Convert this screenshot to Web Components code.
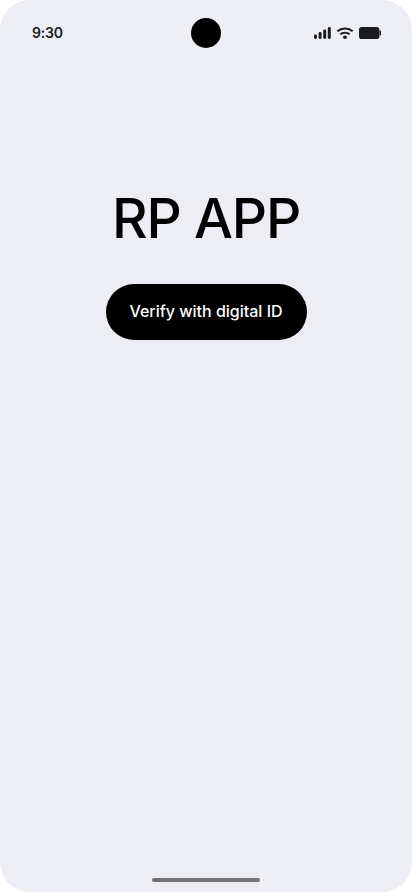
<!DOCTYPE html>
<html>
<head>
<meta charset="utf-8">
<title>RP APP</title>
<style>
  html, body { margin: 0; padding: 0; background: #fff; }
</style>
</head>
<body>
<phone-screen>
  <status-bar time="9:30"></status-bar>
  <rp-home title-text="RP APP" action="Verify with digital ID"></rp-home>
  <gesture-bar></gesture-bar>
</phone-screen>

<script>
class PhoneScreen extends HTMLElement {
  constructor() {
    super();
    this.attachShadow({ mode: 'open' });
    this.shadowRoot.innerHTML = `
      <style>
        :host {
          display: flex;
          flex-direction: column;
          width: 412px;
          height: 892px;
          background: #edeef4;
          border-radius: 30px;
          overflow: hidden;
          font-family: "Inter", "Roboto", sans-serif;
        }
      </style>
      <slot></slot>
    `;
  }
}

class StatusBar extends HTMLElement {
  constructor() {
    super();
    this.attachShadow({ mode: 'open' });
  }

  connectedCallback() {
    this.shadowRoot.innerHTML = `
      <style>
        :host {
          display: grid;
          grid-template-columns: 1fr 30px 1fr;
          align-items: center;
          height: 30px;
          padding: 18px 32px 0;
          flex: none;
        }
        .time {
          font: 600 14px "Inter", sans-serif;
          letter-spacing: -0.2px;
          color: #1b1c20;
          margin-top: -1px;
        }
        .camera {
          width: 30px;
          height: 30px;
          border-radius: 50%;
          background: #000;
        }
        .icons {
          display: flex;
          justify-content: flex-end;
          align-items: center;
          gap: 5px;
          margin-right: -1px;
        }
        svg { display: block; fill: #1b1c20; }
      </style>
      <span class="time">${this.getAttribute('time')}</span>
      <div class="camera"></div>
      <div class="icons">
        <svg width="17" height="12" viewBox="0 0 17 12">
          <rect x="0" y="7.5" width="3" height="4.5" rx="1.4"/>
          <rect x="4.6" y="5" width="3" height="7" rx="1.4"/>
          <rect x="9.2" y="2.5" width="3" height="9.5" rx="1.4"/>
          <rect x="13.8" y="0" width="3" height="12" rx="1.4"/>
        </svg>
        <svg width="18" height="12" viewBox="0 0 17 12" preserveAspectRatio="none">
          <path d="M.6 3.6A11.6 11.6 0 0 1 8.5 .6a11.6 11.6 0 0 1 7.9 3l-1.3 1.5A9.5 9.5 0 0 0 8.5 2.6a9.5 9.5 0 0 0-6.6 2.5z"/>
          <path d="M3.4 6.6A7.5 7.5 0 0 1 8.5 4.7a7.5 7.5 0 0 1 5.1 1.9l-1.3 1.5A5.4 5.4 0 0 0 8.5 6.7a5.4 5.4 0 0 0-3.8 1.4z"/>
          <circle cx="8.5" cy="10.2" r="1.8"/>
        </svg>
        <svg width="22" height="12" viewBox="0 0 22 12">
          <rect x="0" y="0" width="20.4" height="12" rx="2.8"/>
          <rect x="20.6" y="3.6" width="1.4" height="4.8" rx=".6"/>
        </svg>
      </div>
    `;
  }
}

class RpHome extends HTMLElement {
  constructor() {
    super();
    this.attachShadow({ mode: 'open' });
  }

  connectedCallback() {
    this.shadowRoot.innerHTML = `
      <style>
        :host {
          display: flex;
          flex-direction: column;
          align-items: center;
          flex: 1;
          padding-top: 138px;
        }
        h1 {
          margin: 0 0 34px;
          font: 500 55px/64px "Inter", sans-serif;
          letter-spacing: -1.2px;
          color: #000;
        }
        button {
          height: 56px;
          width: 201px;
          padding: 0 0 2px;
          border: 0;
          border-radius: 28px;
          background: #000;
          color: #fff;
          font: 450 16px "Inter", sans-serif;
          letter-spacing: 0;
        }
      </style>
      <h1>${this.getAttribute('title-text')}</h1>
      <button>${this.getAttribute('action')}</button>
    `;
  }
}

class GestureBar extends HTMLElement {
  constructor() {
    super();
    this.attachShadow({ mode: 'open' });
    this.shadowRoot.innerHTML = `
      <style>
        :host {
          display: flex;
          justify-content: center;
          flex: none;
          padding-bottom: 10px;
        }
        div {
          width: 108px;
          height: 4px;
          border-radius: 2px;
          background: #747477;
        }
      </style>
      <div></div>
    `;
  }
}

customElements.define('phone-screen', PhoneScreen);
customElements.define('status-bar', StatusBar);
customElements.define('rp-home', RpHome);
customElements.define('gesture-bar', GestureBar);
</script>
</body>
</html>
